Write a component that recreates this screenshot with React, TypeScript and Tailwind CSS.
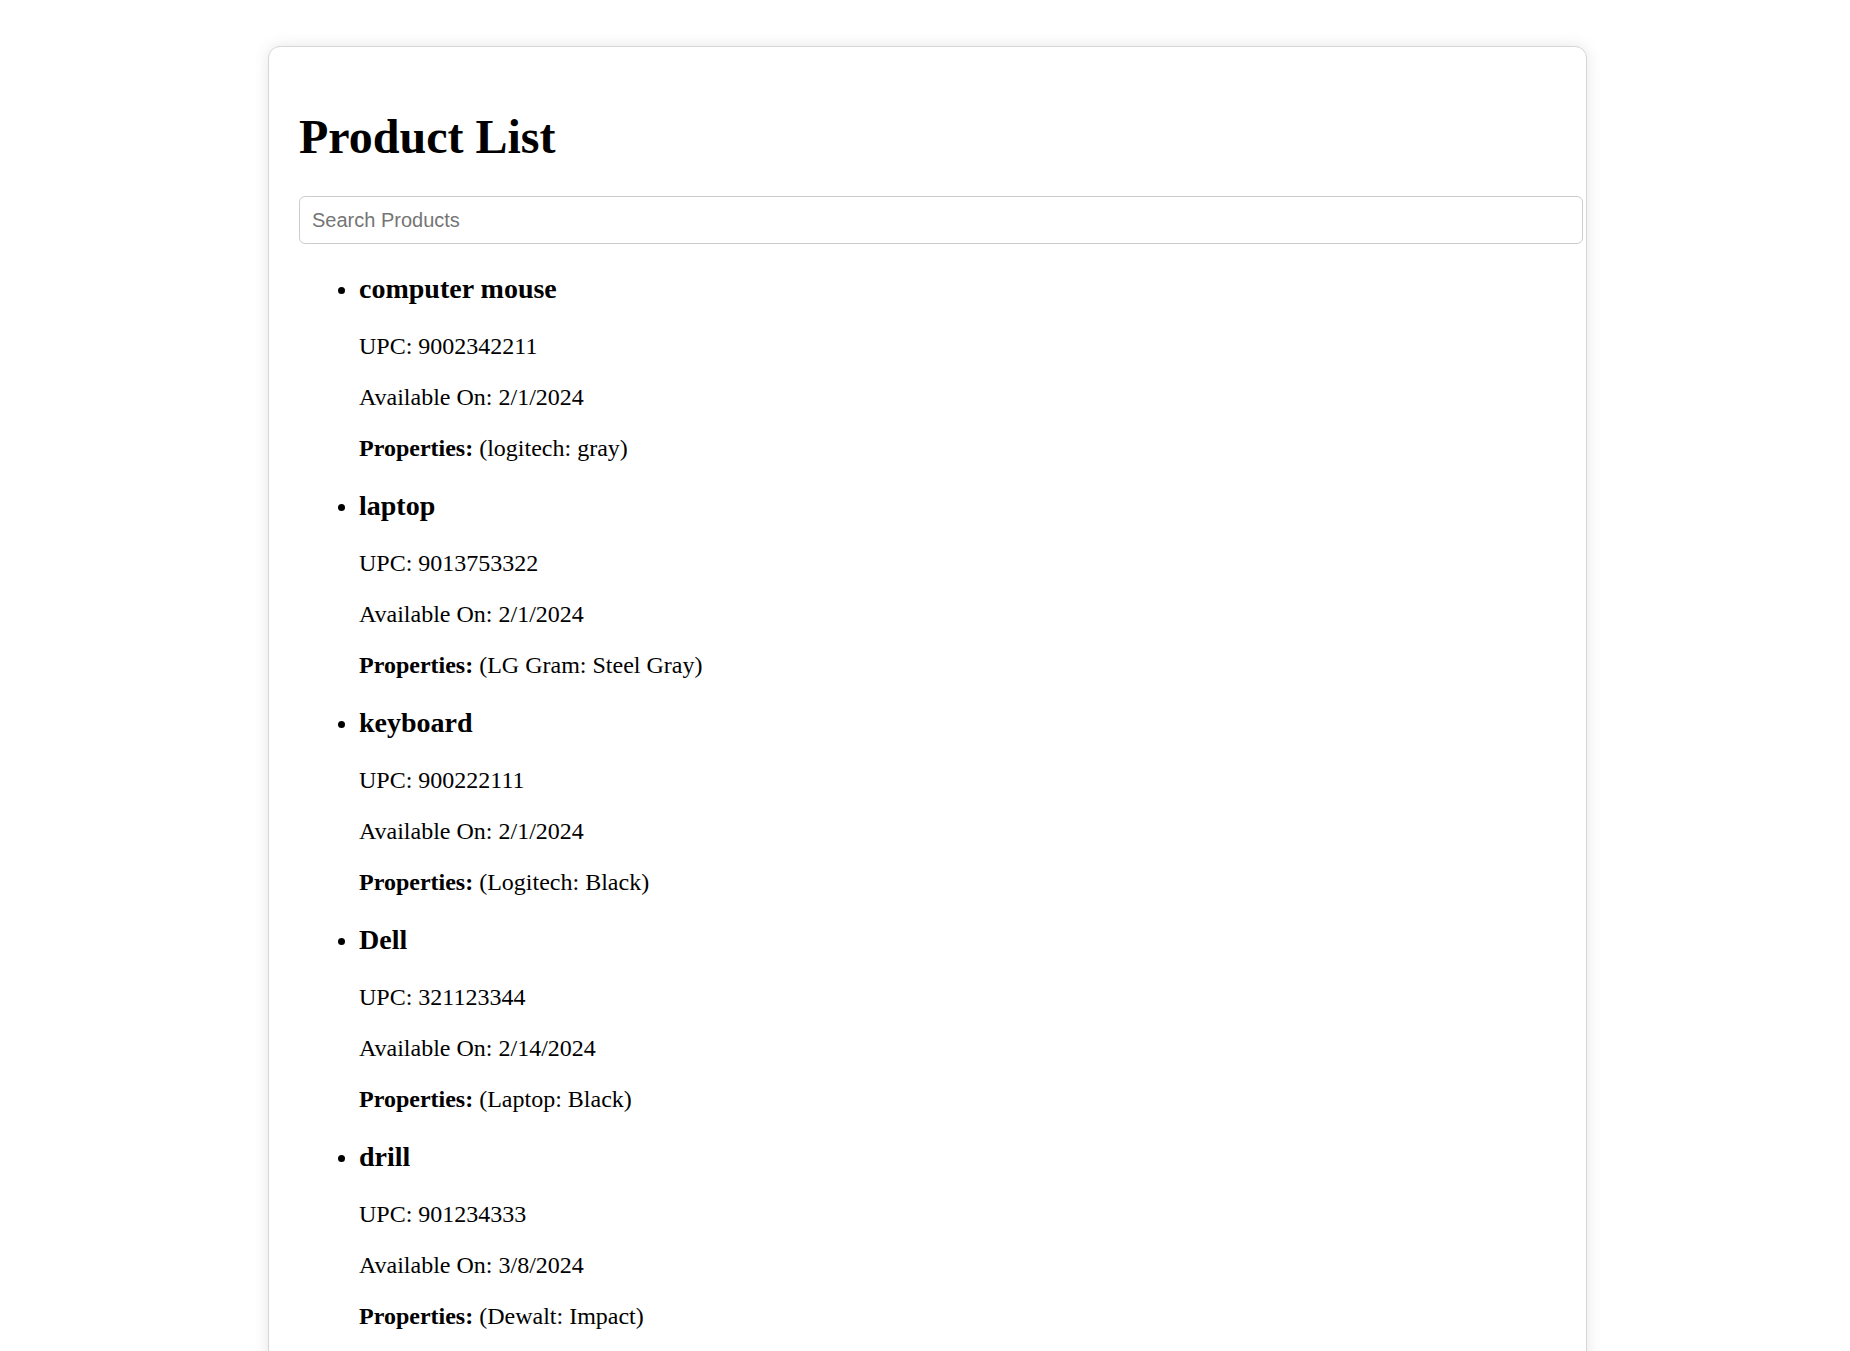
import React from "react";

const products = [
  { name: "computer mouse", upc: "9002342211", date: "2/1/2024", props: "(logitech: gray)" },
  { name: "laptop", upc: "9013753322", date: "2/1/2024", props: "(LG Gram: Steel Gray)" },
  { name: "keyboard", upc: "900222111", date: "2/1/2024", props: "(Logitech: Black)" },
  { name: "Dell", upc: "321123344", date: "2/14/2024", props: "(Laptop: Black)" },
  { name: "drill", upc: "901234333", date: "3/8/2024", props: "(Dewalt: Impact)" },
];

export default function App() {
  return (
    <div className="min-h-screen bg-white pt-[46px] pb-[45px]">
      <div className="ml-[268px] w-[1319px] rounded-[12px] border-[1.5px] border-[#d6d6d6] bg-white p-[30px] text-black shadow-[0_0_15px_rgba(0,0,0,0.1)] font-['Liberation_Serif',serif]">
        <h1 className="mt-[32px] mb-[32px] text-[48px] font-bold leading-[55px]">Product List</h1>
        <input
          type="text"
          placeholder="Search Products"
          className="box-border block h-[48px] w-[1284px] rounded-[6px] border-[1.5px] border-[#cccccc] px-[12px] text-[20px] font-['Liberation_Sans',sans-serif] text-black outline-none placeholder:text-[#757575]"
        />
        <ul className="mt-[29px] mb-[24px] list-disc pl-[60px] text-[24px] leading-[27px]">
          {products.map((p) => (
            <li key={p.name}>
              <h3 className="my-[28px] text-[28px] font-bold leading-[32px]">{p.name}</h3>
              <p className="my-[24px]">UPC: {p.upc}</p>
              <p className="my-[24px]">Available On: {p.date}</p>
              <p className="my-[24px]">
                <strong className="font-bold">Properties:</strong> {p.props}
              </p>
            </li>
          ))}
        </ul>
      </div>
    </div>
  );
}
